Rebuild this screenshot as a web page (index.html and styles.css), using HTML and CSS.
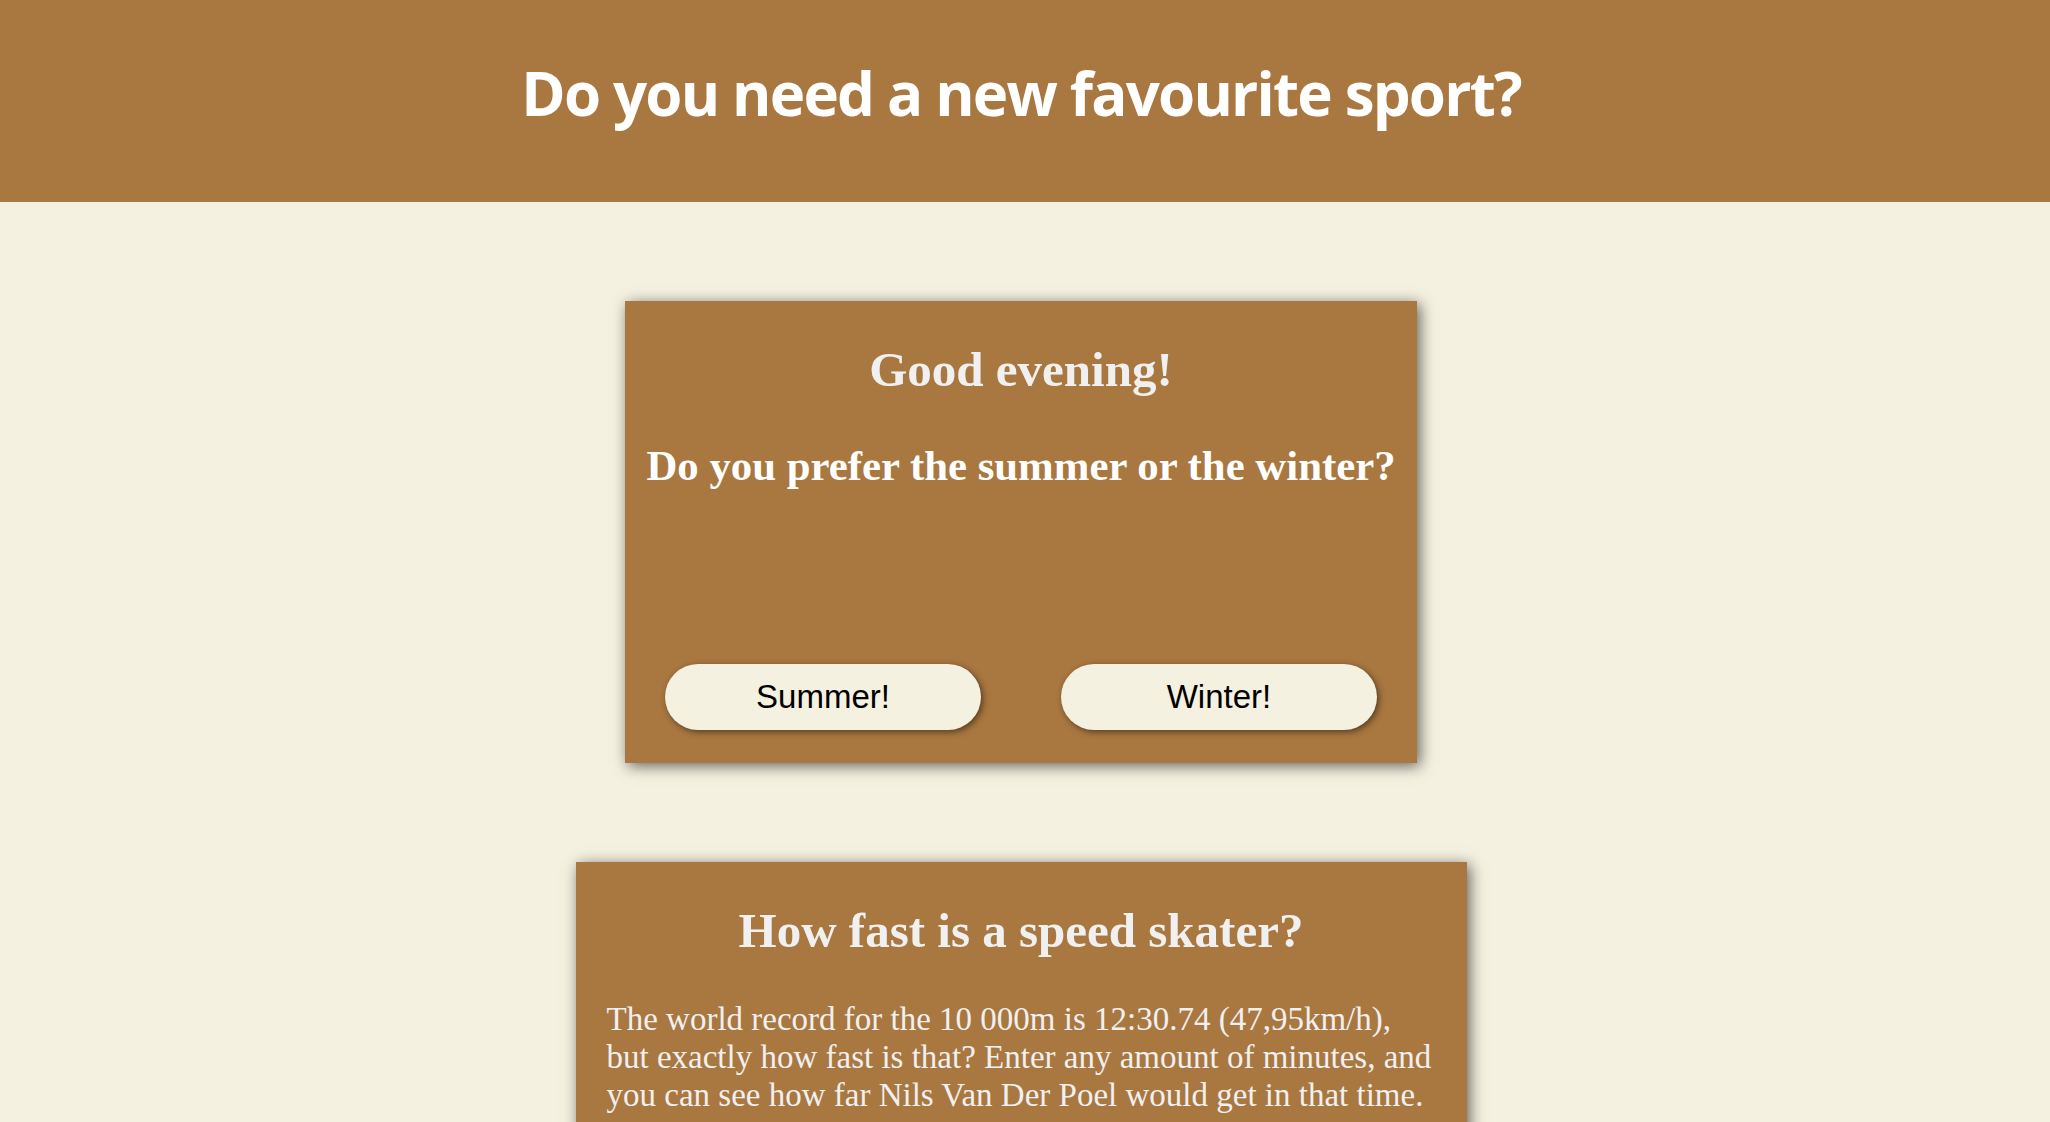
FILE: index.html
```html
<!DOCTYPE html>
<html lang="en">
<head>
<meta charset="utf-8">
<title>Do you need a new favourite sport?</title>
<link rel="stylesheet" href="styles.css">
</head>
<body>
<header class="site-header">
  <h1 class="site-title">Do you need a new favourite sport?</h1>
</header>
<main class="content">
  <section class="card card-question">
    <h2 class="card-title">Good evening!</h2>
    <h3 class="card-question-text">Do you prefer the summer or the winter?</h3>
    <div class="choice-row">
      <button class="choice-btn" type="button">Summer!</button>
      <button class="choice-btn" type="button">Winter!</button>
    </div>
  </section>
  <section class="card card-skater">
    <h2 class="card-title">How fast is a speed skater?</h2>
    <p class="card-text">The world record for the 10 000m is 12:30.74 (47,95km/h), but exactly how fast is that? Enter any amount of minutes, and you can see how far Nils Van Der Poel would get in that time.</p>
  </section>
</main>
</body>
</html>
```

FILE: styles.css
```css
html, body {
  margin: 0;
  padding: 0;
  background: #f5f1e1;
}

body {
  font-family: "Liberation Serif", "Times New Roman", serif;
}

.site-header {
  background: #a97740;
  height: 202px;
  box-sizing: border-box;
  display: flex;
  align-items: center;
  justify-content: center;
  padding: 0 8px 16px 0;
}

.site-title {
  margin: 0;
  color: #ffffff;
  font-family: "Open Sans", "Noto Sans", sans-serif;
  font-weight: 700;
  font-size: 60px;
  letter-spacing: -1.8px;
  line-height: 1.2;
}

.content {
  display: flex;
  flex-direction: column;
  align-items: center;
  padding: 99px 8px 40px 0;
  gap: 99px;
}

.card {
  background: #a97740;
  box-shadow: 3px 3px 14px rgba(0, 0, 0, 0.6);
  box-sizing: border-box;
  text-align: center;
}

.card-question {
  width: 792px;
  height: 462px;
  padding: 20px 0 33px;
  display: flex;
  flex-direction: column;
}

.card-skater {
  width: 891px;
  padding: 20px 31px 40px;
}

.card-title {
  margin: 21px 0 0;
  font-size: 49px;
  line-height: 1.15;
  font-weight: 700;
  color: #f0f0f0;
}

.card-question-text {
  margin: 43px 0 0;
  font-size: 42.8px;
  line-height: 1.15;
  font-weight: 700;
  color: #ffffff;
}

.choice-row {
  margin-top: auto;
  display: flex;
}

.choice-btn {
  width: 40%;
  height: 66px;
  margin: 0 5%;
  border: none;
  border-radius: 33px;
  background: #f5f1e1;
  color: #000000;
  font-family: "Liberation Sans", Arial, sans-serif;
  font-size: 33px;
  box-shadow: 2px 2px 6px rgba(0, 0, 0, 0.5);
  padding: 0;
}

.card-text {
  margin: 42px 0 0;
  text-align: left;
  font-size: 33px;
  line-height: 1.15;
  color: #f0f0f0;
}
```
